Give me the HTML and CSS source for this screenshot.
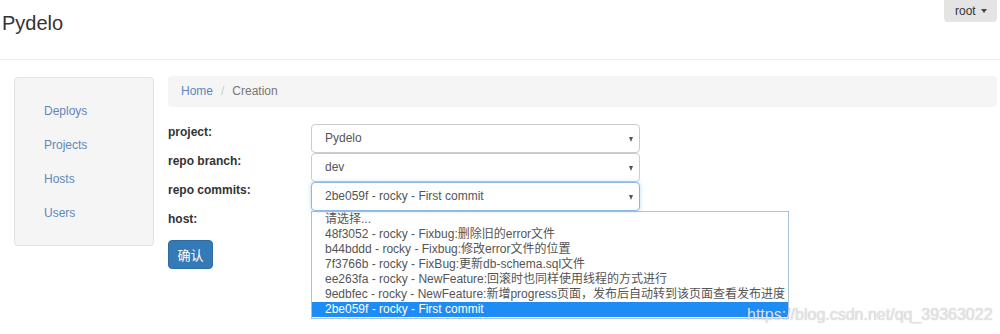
FILE: index.html
```html
<!DOCTYPE html>
<html>
	<head>
		<title>Pydelo</title>
		<meta charset="utf-8">
		<link rel="stylesheet" href="styles.css">
	</head>
	<body>
		<div class="navbar">
			<a class="brand" href="#">Pydelo</a>
			<button class="userBtn">root <span class="caret"></span></button>
		</div>
		<div class="page">
			<div class="sidebar">
				<ul class="sideNav">
					<li><a href="#">Deploys</a></li>
					<li><a href="#">Projects</a></li>
					<li><a href="#">Hosts</a></li>
					<li><a href="#">Users</a></li>
				</ul>
			</div>
			<div class="main">
				<ol class="breadcrumb">
					<li><a href="#">Home</a></li>
					<li class="sep">/</li>
					<li class="active">Creation</li>
				</ol>
				<form class="deployForm">
					<label>project:</label>
					<div class="select">Pydelo<span class="arrow"></span></div>
					<label>repo branch:</label>
					<div class="select">dev<span class="arrow"></span></div>
					<label>repo commits:</label>
					<div class="select focus">2be059f - rocky - First commit<span class="arrow"></span></div>
					<label>host:</label>
					<ul class="options">
						<li>请选择...</li>
						<li>48f3052 - rocky - Fixbug:删除旧的error文件</li>
						<li>b44bddd - rocky - Fixbug:修改error文件的位置</li>
						<li>7f3766b - rocky - FixBug:更新db-schema.sql文件</li>
						<li>ee263fa - rocky - NewFeature:回滚时也同样使用线程的方式进行</li>
						<li>9edbfec - rocky - NewFeature:新增progress页面，发布后自动转到该页面查看发布进度</li>
						<li class="selected">2be059f - rocky - First commit</li>
					</ul>
					<button class="btnPrimary" type="button">确认</button>
				</form>
			</div>
		</div>
		<div class="watermark">https://blog.csdn.net/qq_39363022</div>
	</body>
</html>
```
FILE: styles.css
```css
* {box-sizing: border-box;}
body {margin: 0; font-family: "Liberation Sans", "Noto Sans CJK SC", sans-serif; font-size: 12px; color: #333; background: #fff;}
a {text-decoration: none;}
ul, ol {list-style: none; margin: 0; padding: 0;}

.navbar {display: flex; justify-content: space-between; align-items: flex-start;
	height: 60px; border-bottom: 1px solid #eee;}
.brand {margin: 11px 0 0 2px; font-size: 20px; line-height: 24px; color: #333;}
.userBtn {margin-right: 3px; width: 53px; height: 22px; padding: 0 0 0 11px; text-align: left;
	border: none; border-radius: 0 0 4px 4px; background: #e4e4e4;
	font-family: inherit; font-size: 12px; color: #333;}
.caret {display: inline-block; margin-left: 2px; vertical-align: 2px;
	border-top: 4px solid #444; border-left: 3.5px solid transparent; border-right: 3.5px solid transparent;}

.page {display: flex; gap: 14px; padding: 17px 3px 0 14px;}
.sidebar {width: 140px; flex: none; align-self: flex-start; padding: 16px 0 15px;
	background: #f5f5f5; border: 1px solid #e3e3e3; border-radius: 4px;}
.sideNav a {display: block; height: 34px; line-height: 34px; padding-left: 29px; color: #5f87bb;}

.main {flex: 1;}
.breadcrumb {display: flex; height: 31px; line-height: 31px; padding: 0 13px; margin: -1px 0 17px;
	background: #f5f5f5; border-radius: 4px;}
.breadcrumb a {color: #5f87bb;}
.breadcrumb .sep {margin: 0 8px 0 8px; color: #ccc;}
.breadcrumb .active {color: #777;}

.deployForm {display: grid; grid-template-columns: 143px 478px; grid-template-rows: 29px 29px 29px 29px auto;}
.deployForm label {font-weight: bold; line-height: 17px; color: #333;}
.select {position: relative; width: 329px; height: 29px; line-height: 27px; padding-left: 13px;
	border: 1px solid #ccc; border-radius: 4px; color: #555; background: #fff;}
.select.focus {border-color: #8db6e0; box-shadow: 0 0 4px rgba(102,175,233,.45);}
.arrow {position: absolute; right: 6px; top: 12px;
	border-top: 5px solid #555; border-left: 2.5px solid transparent; border-right: 2.5px solid transparent;}
.options {grid-column: 2; grid-row: 4 / span 2; align-self: start; padding-bottom: 1px;
	background: #fff; border: 1px solid #a9c0de;}
.options li {height: 15px; line-height: 15px; padding-left: 13px; color: #555;
	white-space: nowrap; overflow: hidden;}
.options li.selected {background: #1e8cf5; color: #fff;}

.btnPrimary {grid-column: 1; grid-row: 5; align-self: start;
	width: 45px; height: 29px; padding: 0; border: 1px solid #2e6da4; border-radius: 4px;
	background: #337ab7; color: #fff; font-family: inherit; font-size: 13px;}

.watermark {position: absolute; left: 747px; top: 306px; font-size: 16px; line-height: 18px;
	color: rgba(232,232,232,.92); text-shadow: 0 0 1px rgba(120,120,120,.5);}
```
